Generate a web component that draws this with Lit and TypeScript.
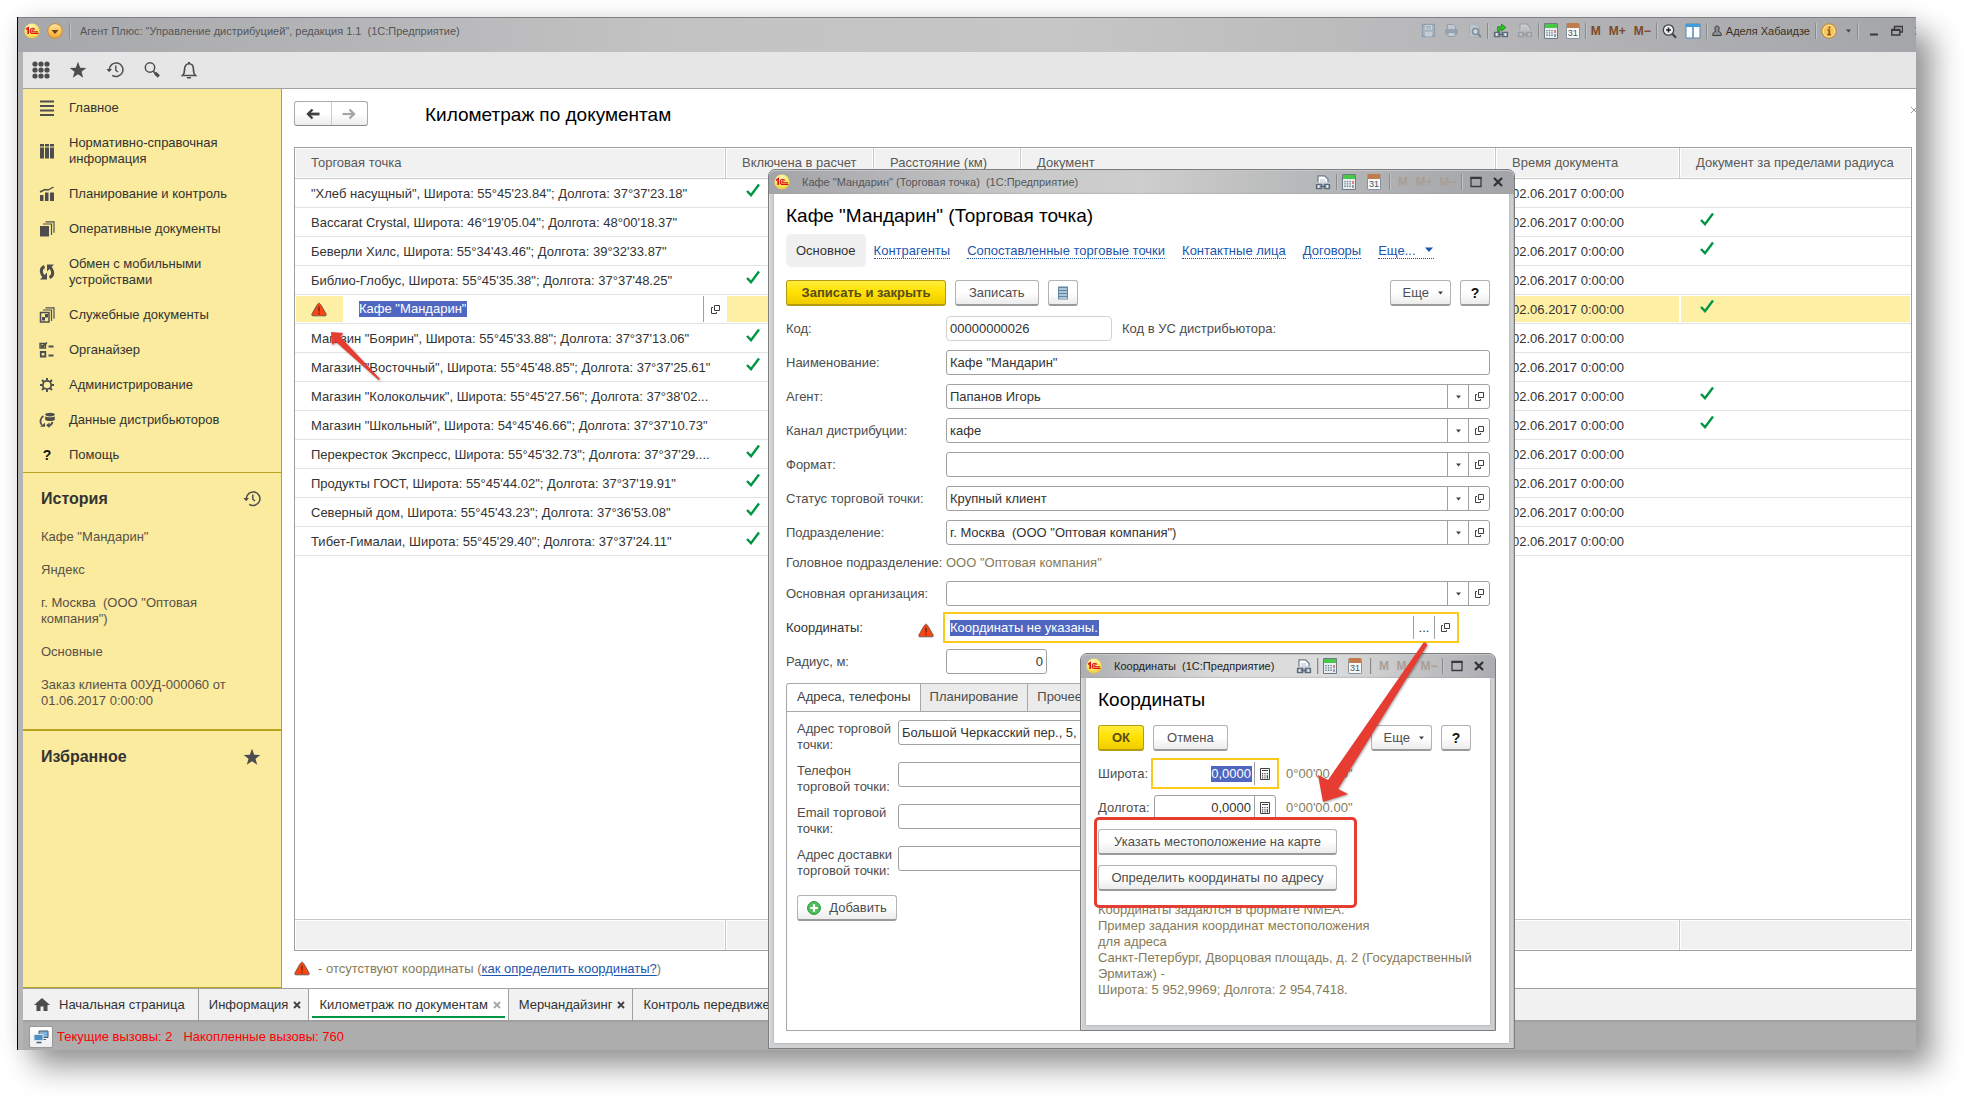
import { LitElement, html, css, svg, nothing } from "lit";
import { customElement, property } from "lit/decorators.js";
import { classMap } from "lit/directives/class-map.js";

/* ---------- icons ---------- */
const icon = (w: number, h: number, body: unknown) =>
  html`<svg class="ico" width=${w} height=${h} viewBox="0 0 ${w} ${h}" aria-hidden="true">${body}</svg>`;

const logo = () => icon(16, 16, svg`
  <defs><radialGradient id="lg" cx=".45" cy=".3" r=".75"><stop offset="0" stop-color="#fffbc8"/><stop offset=".6" stop-color="#fbe75a"/><stop offset="1" stop-color="#e6b93c"/></radialGradient></defs>
  <circle cx="8" cy="8" r="7.6" fill="url(#lg)"/>
  <path d="M2 6.4L4.2 4.9V11" fill="none" stroke="#dc1414" stroke-width="1.7"/>
  <path d="M11 6.6C9.800 4.300 6.200 5 6.200 7.900C6.200 9.700 7.200 10.500 8.800 10.500H14.500M10 7.200C9 6.400 7.900 7 7.900 8C7.900 8.700 8.400 8.900 9 8.900H14" fill="none" stroke="#dc1414" stroke-width="1.100"/>`);
const menuBall = () => icon(16, 20, svg`
  <defs><linearGradient id="mb" x2="0" y2="1"><stop offset="0" stop-color="#ffe9ae"/><stop offset=".5" stop-color="#fbc45c"/><stop offset="1" stop-color="#f3a83a"/></linearGradient></defs>
  <circle cx="8" cy="10" r="7.300" fill="url(#mb)" stroke="#c98a33" stroke-width="1"/><path d="M4.500 9h7l-3.500 4z" fill="#6b4216"/>`);
const grid = () => icon(18, 18, svg`${[3, 9, 15].map(y => [3, 9, 15].map(x => svg`<circle cx=${x} cy=${y} r="2.600" fill="#4d4d4d"/>`))}`);
const star = () => icon(18, 18, svg`<path d="M9 .8L11.200 6.700L17.300 6.900L12.500 10.700L14.200 16.700L9 13.200L3.800 16.700L5.500 10.700L.7 6.900L6.800 6.700Z" fill="#4d4d4d"/>`);
const history = () => icon(18, 18, svg`
  <path d="M3.300 8.500A6.800 6.800 0 1 1 6.200 14.300" fill="none" stroke="#4d4d4d" stroke-width="1.500"/>
  <path d="M.4 8L6 8L3.200 11.200Z" fill="#4d4d4d"/><path d="M9.800 4.500V9.200L12 11" fill="none" stroke="#4d4d4d" stroke-width="1.400"/>`);
const search = () => icon(18, 18, svg`<circle cx="7" cy="6.500" r="4.700" fill="none" stroke="#4d4d4d" stroke-width="1.500"/><path d="M10 10L12.500 12.300" stroke="#4d4d4d" stroke-width="1.600"/><path d="M12 11.800L15.800 15.500" stroke="#4d4d4d" stroke-width="3.200"/>`);
const bell = () => icon(18, 18, svg`<path d="M2.500 14.500C4.600 12.500 4.600 11 4.600 8C4.600 4.700 6.300 2.800 9 2.800S13.400 4.700 13.400 8C13.400 11 13.400 12.500 15.500 14.500Z" fill="none" stroke="#4d4d4d" stroke-width="1.600"/><rect x="8" y="1" width="2" height="2" fill="#4d4d4d"/><path d="M7 16h4v1.500h-4z" fill="#4d4d4d"/>`);

const nav: Record<string, unknown> = {
  main: svg`<path d="M1 1.500h14M1 6h14M1 10.500h14M1 15h14" stroke="#4d4d4d" stroke-width="2"/>`,
  ref: svg`<path d="M1 1h4v2.500h-4zM6 1h4v2.500h-4zM11 1h4v2.500h-4zM1 4.500h4v11h-4zM6 4.500h4v11h-4zM11 4.500h4v11h-4z" fill="#4d4d4d"/>`,
  plan: svg`<path d="M1 9h3.500v6h-3.500zM6 6.500h3.500v8.500h-3.500zM11 6.500h4v8.500h-4z" fill="#4d4d4d"/><path d="M1 6L6 3.500L9 4L14.500 1" fill="none" stroke="#4d4d4d" stroke-width="1.400"/>`,
  oper: svg`<path d="M1 5h9v10.500h-9z" fill="#4d4d4d"/><path d="M4 3h8.500v11M6.500 .8h8.500v11" fill="none" stroke="#4d4d4d" stroke-width="1.200"/>`,
  sync: svg`<path d="M5.500 2.500C3 3.500 2 6 2.500 8.500C2.900 10.500 4 12 5.500 13" fill="none" stroke="#4d4d4d" stroke-width="3"/><path d="M1 15.500h7V8.500z" fill="#4d4d4d"/><path d="M10.500 13.500C13 12.500 14 10 13.500 7.500C13.100 5.500 12 4 10.500 3" fill="none" stroke="#4d4d4d" stroke-width="3"/><path d="M15 .5H8V7.500z" fill="#4d4d4d"/>`,
  serv: svg`<path d="M1.500 5.500h8.500v9.500h-8.500z" fill="none" stroke="#4d4d4d" stroke-width="1.500"/><path d="M3 10h3v3.500h-3zM6 7h3v3.500h-3z" fill="#4d4d4d"/><path d="M4 3h8.500v11M6.500 .8h8.500v11" fill="none" stroke="#4d4d4d" stroke-width="1.200"/>`,
  org: svg`<path d="M1 1.500h5.500v4.500h-5.500z" fill="none" stroke="#4d4d4d" stroke-width="1.300"/><path d="M1.500 2.500L4 5L8 .5M1.500 5.500L6 2" fill="none" stroke="#4d4d4d" stroke-width="1.300"/><path d="M9.500 4.500h5" stroke="#4d4d4d" stroke-width="2"/><path d="M1.800 10h4.500v4.500h-4.500z" fill="none" stroke="#4d4d4d" stroke-width="1.800"/><path d="M9.500 13.500h5" stroke="#4d4d4d" stroke-width="2"/>`,
  admin: svg`<circle cx="8" cy="8" r="4.200" fill="none" stroke="#4d4d4d" stroke-width="1.800"/><path d="M8 1v2.500M8 12.500V15M1 8h2.500M12.500 8H15M3 3l2 2M11 11l2 2M13 3l-2 2M5 11l-2 2" stroke="#4d4d4d" stroke-width="1.900"/>`,
  data: svg`<ellipse cx="11" cy="2.600" rx="4.800" ry="1.800" fill="#4d4d4d"/><path d="M6.200 4.200c1 1.400 8.600 1.400 9.600 0v3.500c-1 1.800-8.600 1.800-9.600 0z" fill="#4d4d4d"/><path d="M4.500 4C1 6 .5 10.500 2.800 13" fill="none" stroke="#4d4d4d" stroke-width="1.800"/><path d="M1 14.800h5v-4z" fill="#4d4d4d"/><path d="M13.500 10C13 12 11.500 13.500 9.500 13.800" fill="none" stroke="#4d4d4d" stroke-width="1.800"/><path d="M7 13.300l3.500-2.800v5.500z" fill="#4d4d4d"/>`,
};

const arrowL = (c: string) => icon(14, 12, svg`<path d="M6.500 1.500L2 6L6.500 10.500" fill="none" stroke=${c} stroke-width="2.400"/><path d="M2 6H13.500" stroke=${c} stroke-width="2.800"/>`);
const arrowR = (c: string) => icon(14, 12, svg`<path d="M7.500 1.500L12 6L7.500 10.500" fill="none" stroke=${c} stroke-width="2.400"/><path d="M12 6H.5" stroke=${c} stroke-width="2.200"/>`);
const check = () => icon(14, 14, svg`<path d="M1 8L5 12.200L13 1.500" fill="none" stroke="#009646" stroke-width="2.400"/>`);
const warn = () => icon(16, 15, svg`<path d="M8 1.200C8.800 1.200 9.500 2.200 10.200 3.400L14.800 11.500C15.600 13 15.300 13.800 14 13.800H2C.7 13.800 .4 13 1.200 11.500L5.800 3.400C6.500 2.200 7.200 1.200 8 1.200Z" fill="#fb4410" stroke="#6d5a52" stroke-width="1"/><path d="M8 4.500V9.500M8 10.800V12.300" stroke="#7c2d12" stroke-width="1.600"/>`);
const open = () => icon(11, 11, svg`<path d="M4.500 1.500h5v5h-5z" fill="none" stroke="#404040"/><path d="M3 3.500h-1.500v6h5v-1.500" fill="none" stroke="#404040"/>`);
const caret = (c = "#404040") => icon(7, 4, svg`<path d="M1 .5h5L3.500 3.500z" fill=${c}/>`);
const calcMono = () => icon(10, 12, svg`<path d="M.5 .5h9v11h-9z" fill="#fff" stroke="#404040"/><path d="M2 2.500h6" stroke="#404040"/><path d="M2 5h1.200v1.200h-1.200zM4.400 5h1.200v1.200h-1.200zM6.800 5h1.200v1.200h-1.200zM2 7.300h1.200v1.200h-1.200zM4.400 7.300h1.200v1.200h-1.200zM6.800 7.300h1.200v3.200h-1.200zM2 9.300h1.200v1.200h-1.200zM4.400 9.300h1.200v1.200h-1.200z" fill="#404040"/>`);
const listIcon = () => icon(12, 14, svg`<path d="M1 .5h10v13h-10z" fill="#5f87a5"/><path d="M2 3h8M2 6h8M2 9h8M2 12h8" stroke="#c5dcec" stroke-width="1.400"/>`);
const plus = () => icon(14, 14, svg`<circle cx="7" cy="7" r="6.400" fill="#4fbf5a" stroke="#239338"/><path d="M7 3.200V10.800M3.200 7H10.800" stroke="#fff" stroke-width="2.200"/>`);
const home = () => icon(16, 13, svg`<path d="M8 0L16 7H13.500V13H9.500V8.500H6.500V13H2.500V7H0Z" fill="#4d4d4d"/>`);
const cross = (c: string) => icon(8, 8, svg`<path d="M1 1L7 7M7 1L1 7" stroke=${c} stroke-width="1.800"/>`);
const monitors = () => icon(16, 14, svg`<path d="M6 1h9v6.500h-9z" fill="#7fb2d8" stroke="#4a5a68"/><path d="M9 9.500h4" stroke="#4a5a68"/><path d="M1 4.500h9v6h-9z" fill="#4e8ec0" stroke="#d6e6f0"/><path d="M3.500 12.500h5" stroke="#4a5a68" stroke-width="1.500"/>`);

const save = () => icon(15, 15, svg`<path d="M1.500 1.500h12v12h-12z" fill="#a9b5c1" stroke="#8e9eae" stroke-width="1.300"/><path d="M4 2h7v4.500h-7z" fill="#d0d5da"/><path d="M4 9h7v4.500h-7z" fill="#c4cbd2"/><path d="M5 3.500h5M5 5h5" stroke="#9aa8b6"/>`);
const print = () => icon(15, 15, svg`<path d="M3.500 6V1.500h6l2 2V6" fill="#c2c8ce" stroke="#919fac"/><path d="M1 6h13v5.500h-13z" fill="#95a3b1"/><path d="M4 9.500h7v4h-7z" fill="#c6ccd2" stroke="#919fac"/>`);
const preview = () => icon(15, 15, svg`<path d="M2.500 1h7l3 3v10h-10z" fill="#bcc4cb" stroke="#a0acb7"/><circle cx="8.500" cy="8.500" r="3" fill="#cbd2d8" stroke="#7d8d9b" stroke-width="1.500"/><path d="M10.800 10.800L14 14" stroke="#7d8d9b" stroke-width="2"/>`);
const chain = svg`<path d="M1.700 9.500h4.800v4h-4.800zM9.500 9.500h4.800v4h-4.800z" fill="#fff" stroke="#5a6c7c" stroke-width="1.700" stroke-linejoin="round"/><path d="M4.500 11.500h7" stroke="#5a6c7c" stroke-width="1.700"/>`;
const linkIn = () => icon(16, 15, svg`${chain}<path d="M4.500 8.500V3.800H8.500V1L13 4.600L8.500 8V6H6.800V8.500Z" fill="#2fc52a" stroke="#158a16" stroke-width=".8"/>`);
const linkDoc = (op: number) => icon(16, 15, svg`<g opacity=${op}><path d="M3 9V.8h6.500l3.500 3.500V9" fill="#fff" stroke="#6a7a89" stroke-width="1.200"/><path d="M5 5h5M5 7h6" stroke="#b4bfc9"/><path d="M1 7.500h14v6h-14z" fill="#c9d0d7"/>${chain}</g>`);
const calc = () => icon(14, 16, svg`<path d="M.5 .5h13v15h-13z" fill="#e9edf0" stroke="#6d7b85"/><path d="M1 1h12v4h-12z" fill="#49c74b"/><path d="M3 7v7M5.500 7v7M8 7v7" stroke="#5d7888" stroke-width="1.300" stroke-dasharray="1.300 1"/><path d="M11 7v3" stroke="#d84a3a" stroke-width="1.300"/><path d="M11 11v3" stroke="#5d7888" stroke-width="1.300"/>`);
const calendar = () => html`<span class="cal"><span class="calday">31</span></span>`;
const mag = () => icon(15, 16, svg`<circle cx="6.500" cy="7" r="5.200" fill="#eef0f2" stroke="#3f4448" stroke-width="1.300"/><path d="M4 7h5M6.500 4.500v5" stroke="#222" stroke-width="1.500"/><path d="M10.500 11L14 14.800" stroke="#3f4448" stroke-width="2.200"/>`);
const cols = () => icon(16, 16, svg`<path d="M1 1h14v14h-14z" fill="#fdfdfd" stroke="#5686ad"/><path d="M1 1h14v3h-14z" fill="#3f9be0"/><path d="M8 4v11" stroke="#5686ad" stroke-width="1.500"/>`);
const user = () => icon(10, 12, svg`<path d="M5 1C6.500 1 7.200 2 7.200 3.300C7.200 4.800 6.400 5.600 6.400 6.500C8.500 7 9.300 8 9.300 10.500H.7C.7 8 1.500 7 3.600 6.500C3.600 5.600 2.800 4.800 2.800 3.300C2.800 2 3.500 1 5 1Z" fill="#8d8d8d" stroke="#3c3c3c"/>`);
const info = () => icon(16, 16, svg`<circle cx="8" cy="8" r="7.200" fill="#f9c55e" stroke="#c48828"/><circle cx="8" cy="8" r="5.800" fill="none" stroke="#fde3a5"/><path d="M8.400 3.500v2M6.500 7h1.800v4.500M6.300 11.700h3.600" stroke="#8a5a12" stroke-width="1.700" fill="none"/>`);
const minimize = () => icon(9, 12, svg`<path d="M0 9.500h8" stroke="#3a3a3a" stroke-width="2"/>`);
const restore = () => icon(12, 12, svg`<path d="M3.500 4V1.500h8v5.500H9" fill="none" stroke="#3a3a3a" stroke-width="1.400"/><path d="M.8 4.500h8v5.500h-8z" fill="none" stroke="#3a3a3a" stroke-width="1.400"/><path d="M.5 5h8.500" stroke="#3a3a3a" stroke-width="2"/>`);
const maximize = () => icon(12, 12, svg`<path d="M1 1.500h10v9h-10z" fill="none" stroke="#3a3a3a" stroke-width="1.300"/><path d="M.5 2h11" stroke="#3a3a3a" stroke-width="2"/>`);
const winClose = () => icon(10, 10, svg`<path d="M1 1L9 9M9 1L1 9" stroke="#333" stroke-width="2.300"/>`);

const base = css`
  * { box-sizing: border-box; }
  .ico { display: block; flex: none; }
  button, input, select { font: inherit; color: inherit; margin: 0; padding: 0; border: 0; background: none; border-radius: 0; }
  button { cursor: pointer; }
  .tb { display: flex; align-items: center; justify-content: center; flex: none; }
  .sep { width: 1px; height: 16px; background: #8a8b8e; box-shadow: 1px 0 #c2c3c6; flex: none; }
  .mem { font-weight: bold; font-size: 12px; color: #7c4a26; }
  .mem.off { color: #a99e96; }
  .cal { display: block; width: 14px; height: 16px; border: 1px solid #8493a0; border-top: 5px solid #c07c4c; background: #f6f8fa; border-radius: 2px; }
  .calday { display: block; font-size: 9px; line-height: 10px; color: #46545f; text-align: center; }
`;

/* ---------- child window of the desktop ---------- */
@customElement("child-window")
export class ChildWindow extends LitElement {
  @property() heading = "";
  @property({ type: Boolean, reflect: true }) active = false;

  static styles = [base, css`
    :host { display: flex; flex-direction: column; background: #cfd0d1; border: 1px solid #7c7d7f; border-radius: 7px 7px 0 0; padding: 0 5px 5px; box-shadow: inset 1px 0 #dedfe0, inset -1px 0 #b9babc; }
    .bar { display: flex; align-items: center; height: 24px; margin: 0 -5px; padding: 0 11px 0 5px; border-radius: 6px 6px 0 0; background: linear-gradient(90deg, #a3a4a7, #c9c9c9 35%, #cecece 50%, #b9babb 70%, #a3a4a8); box-shadow: inset 0 1px #c6c7c9; font-size: 11px; color: #55565a; }
    :host([active]) .bar { background: linear-gradient(90deg, #aeafb2, #dcdcdc 35%, #dcdcdc 60%, #acadb1); color: #222; }
    .name { flex: 1; margin-left: 12px; white-space: pre; overflow: hidden; }
    .tools { display: flex; align-items: center; }
    .tools .mem { width: 16px; text-align: center; }
    .body { flex: 1; display: flex; flex-direction: column; background: #fff; min-height: 0; box-shadow: 0 0 2px #9a9b9d; }
    .g5 { margin-left: 5px; } .g8 { margin-left: 8px; } .g11 { margin-left: 11px; }
  `];

  render() {
    return html`
      <div class="bar">${logo()}<span class="name">${this.heading}</span>
        <div class="tools">
          <button class="tb" aria-label="Печать">${linkDoc(1)}</button><span class="sep g5"></span>
          <button class="tb g5" aria-label="Калькулятор">${calc()}</button>
          <button class="tb g11" aria-label="Календарь">${calendar()}</button><span class="sep g8"></span>
          <button class="tb mem off g5">M</button><button class="tb mem off g5">M+</button><button class="tb mem off g8">M−</button><span class="sep g5"></span>
          <button class="tb g8" aria-label="Развернуть">${maximize()}</button>
          <button class="tb g11" aria-label="Закрыть">${winClose()}</button>
        </div>
      </div>
      <div class="body"><slot></slot></div>`;
  }
}

type Row = [string, boolean, boolean];
const rows: Row[] = [
  [`"Хлеб насущный", Широта: 55°45'23.84"; Долгота: 37°37'23.18"`, true, false],
  [`Baccarat Crystal, Широта: 46°19'05.04"; Долгота: 48°00'18.37"`, false, true],
  [`Беверли Хилс, Широта: 55°34'43.46"; Долгота: 39°32'33.87"`, false, true],
  [`Библио-Глобус, Широта: 55°45'35.38"; Долгота: 37°37'48.25"`, true, false],
  [`Кафе "Мандарин"`, false, true],
  [`Магазин "Боярин", Широта: 55°45'33.88"; Долгота: 37°37'13.06"`, true, false],
  [`Магазин "Восточный", Широта: 55°45'48.85"; Долгота: 37°37'25.61"`, true, false],
  [`Магазин "Колокольчик", Широта: 55°45'27.56"; Долгота: 37°38'02...`, false, true],
  [`Магазин "Школьный", Широта: 54°45'46.66"; Долгота: 37°37'10.73"`, false, true],
  [`Перекресток Экспресс, Широта: 55°45'32.73"; Долгота: 37°37'29....`, true, false],
  [`Продукты ГОСТ, Широта: 55°45'44.02"; Долгота: 37°37'19.91"`, true, false],
  [`Северный дом, Широта: 55°45'43.23"; Долгота: 37°36'53.08"`, true, false],
  [`Тибет-Гималаи, Широта: 55°45'29.40"; Долгота: 37°37'24.11"`, true, false],
];
const sections: [string, string][] = [
  ["main", "Главное"], ["ref", "Нормативно-справочная информация"], ["plan", "Планирование и контроль"],
  ["oper", "Оперативные документы"], ["sync", "Обмен с мобильными устройствами"], ["serv", "Служебные документы"],
  ["org", "Органайзер"], ["admin", "Администрирование"], ["data", "Данные дистрибьюторов"], ["help", "Помощь"],
];
const recent = [`Кафе "Мандарин"`, `Яндекс`, `г. Москва  (ООО "Оптовая компания")`, `Основные`, `Заказ клиента 00УД-000060 от 01.06.2017 0:00:00`];

@customElement("app-root")
export class AppRoot extends LitElement {
  static styles = [base, css`
    :host { display: block; font-family: "Liberation Sans", Arial, sans-serif; font-size: 13px; line-height: 16px; color: #333; background: #fff; }
    .page { min-height: 100vh; padding: 17px 48px 48px 17px; display: flex; overflow: hidden; }
    .app { position: relative; flex: 1; min-width: 0; display: flex; flex-direction: column; border-left: 1px solid #000; padding-left: 5px; background: #b4b4b5; box-shadow: 17px 17px 28px rgba(0,0,0,.4), 0 0 20px rgba(0,0,0,.08); }
    a { color: #1c55ae; }

    .titlebar { display: flex; align-items: center; height: 35px; margin-left: -5px; padding: 0 0 9px 6px; border-top: 1px solid #7f8082; background: linear-gradient(90deg, #a6a7aa, #c3c3c4 35%, #c6c6c6 55%, #a5a6aa); font-size: 11px; color: #55565a; overflow: hidden; }
    .titlebar .ball { margin: 0 6px 0 7px; }
    .titlebar .name { flex: 1; white-space: pre; margin-left: 10px; }
    .tools { display: flex; align-items: center; gap: 5px; margin-right: -9px; }
    .tools .tb + .tb { margin-left: 3px; }
    .tools .tb.wide { margin-left: 7px; }
    .user { gap: 4px; color: #40301c; white-space: nowrap; }
    .toolbar { display: flex; align-items: center; gap: 19px; height: 37px; padding-left: 9px; background: #e6e6e6; border-bottom: 1px solid #a0a0a0; }

    .middle { flex: 1; display: flex; min-height: 0; background: #fff; }
    .side { flex: none; width: 259px; display: flex; flex-direction: column; background: #faeb9e; border-right: 1px solid #b9a21c; border-bottom: 1px solid #b9a21c; }
    .sections { list-style: none; margin: 0; padding: 1px 0 0; border-bottom: 1px solid #b9a21c; }
    .sections a { display: flex; align-items: center; gap: 14px; padding: 10px 40px 9px 16px; color: #333; text-decoration: none; }
    .sections .q { width: 16px; text-align: center; font-size: 14px; font-weight: bold; color: #111; flex: none; }
    .block { padding: 16px 20px 0 18px; }
    .block.hist { padding-bottom: 20px; border-bottom: 2px solid #b9a21c; }
    .blockhead { display: flex; align-items: center; justify-content: space-between; }
    h2 { margin: 0; font-size: 16px; line-height: 20px; color: #333; }
    .recent { list-style: none; margin: 20px 0 0; padding: 0; display: flex; flex-direction: column; gap: 17px; }
    .recent a { color: #595048; text-decoration: none; white-space: pre-wrap; display: block; max-width: 190px; }

    .work { flex: 1; min-width: 0; display: flex; flex-direction: column; padding: 12px 4px 0 12px; }
    .head { display: flex; align-items: flex-start; height: 46px; }
    .navbtns { display: flex; border: 1px solid #aaa; border-bottom-color: #888; border-radius: 3px; background: linear-gradient(#fff 50%, #ececec); width: 74px; height: 25px; }
    .navbtns button { flex: 1; display: flex; align-items: center; justify-content: center; }
    .navbtns button + button { border-left: 1px solid #ccc; }
    h1 { margin: 4px 0 0 57px; flex: 1; font-size: 19px; line-height: 20px; font-weight: normal; color: #000; }
    .head .x { margin: 5px -4px 0 0; }

    .tablebox { flex: 1; display: flex; border: 1px solid #a0a0a0; min-height: 0; }
    table { width: 100%; table-layout: fixed; border-collapse: separate; border-spacing: 0; }
    .c1 { width: 431px; } .c2 { width: 148px; } .c3 { width: 147px; } .c4 { width: 475px; } .c5 { width: 184px; }
    th, tfoot td { height: 31px; padding: 0 0 0 16px; text-align: left; font-weight: normal; color: #595959; background: #f1f1f1; border: 0 solid #c8c8c8; border-right-width: 1px; box-shadow: inset 0 0 0 1px #fff; white-space: nowrap; }
    th { border-bottom-width: 1px; }
    tfoot td { border-top-width: 1px; }
    th:last-child, tfoot td:last-child { border-right-width: 0; }
    tbody td { height: 29px; padding: 1px 0 0 16px; border-bottom: 1px solid #e2e2e2; white-space: nowrap; overflow: hidden; }
    .tick { display: block; padding: 0 0 7px 4px; }
    tr.fill td { height: auto; border: 0; }
    tr.sel td { background: #fdf0a4; box-shadow: inset 0 0 0 1px #fff; }
    tr.sel td:first-child { padding: 0; }
    .edit { display: flex; align-items: stretch; height: 26px; }
    .edit .mark { width: 48px; display: flex; align-items: center; justify-content: center; }
    .edit .val { flex: 1; background: #fff; display: flex; align-items: center; padding-left: 16px; }
    .edit .opn { width: 23px; background: #fff; border-left: 1px solid #a0a0a0; display: flex; align-items: center; justify-content: center; }
    .hl { field-sizing: content; height: 16px; padding-right: 1px; background: #4f67c1; color: #fff; }
    .legend { display: flex; align-items: center; gap: 8px; height: 37px; padding-bottom: 2px; color: #857b58; }
    .legend a { text-underline-offset: 2px; }

    .tabs { display: flex; height: 34px; border-top: 1px solid #a0a0a0; border-bottom: 2px solid #a0a0a0; background: #f1f1f1; overflow: hidden; }
    .tab { display: flex; align-items: center; gap: 5px; padding: 0 7px 0 10px; border-right: 1px solid #a0a0a0; white-space: nowrap; }
    .tab.first { padding: 0 13px 0 11px; gap: 9px; }
    .tab.on { background: linear-gradient(#009646, #009646) no-repeat center bottom 2px / calc(100% - 6px) 2px, #fff; }
    .status { display: flex; align-items: center; gap: 4px; height: 28px; padding: 2px 0 0 6px; background: #adadad; color: #f00; white-space: pre; }
    .status button { width: 24px; height: 22px; display: flex; align-items: center; justify-content: center; background: linear-gradient(#fff, #eee); border: 1px solid #999; border-radius: 2px; }

    /* windows lying over the desktop */
    .w1 { position: absolute; left: 750px; top: 152px; bottom: 1px; width: 747px; z-index: 1; }
    .w2 { position: absolute; left: 1062px; top: 636px; bottom: 19px; width: 416px; z-index: 2; }
    .form { flex: 1; display: flex; flex-direction: column; padding: 12px 19px 12px 12px; min-height: 0; }
    .w1 .form h1, .w2 .form h1 { margin: 0; flex: none; }
    .pages { display: flex; align-items: center; height: 33px; margin-top: 8px; }
    .pages a { margin: 0 9px 0 8px; text-decoration: none; border-bottom: 1px dotted #1c55ae; line-height: 15px; display: flex; align-items: center; gap: 8px; white-space: nowrap; }
    .pages .cur { background: #f0f0f0; border-radius: 5px; padding: 0 10px; height: 33px; line-height: 33px; }
    .btns { display: flex; gap: 9px; margin: 13px 0 10px; }
    .btn { height: 26px; display: flex; align-items: center; justify-content: center; gap: 8px; padding: 1px 13px 0; white-space: nowrap; color: #4d4d4d; border: 1px solid #b3b3b3; border-bottom: 2px solid #9a9a9a; border-radius: 3px; background: linear-gradient(#fff 50%, #ececec); }
    .btn.main { font-weight: bold; background: linear-gradient(#ffec3c, #ffe100 50%, #f0cc00); border-color: #b39b14; color: #574d1c; }
    .btn.wide { min-width: 160px; }
    .btn.sq { width: 30px; padding: 0; }
    .btn.q { font-weight: bold; font-size: 14px; color: #111; }
    .btn.more { padding: 1px 6px 0 12px; }
    .push { margin-left: auto; }
    .rows { display: flex; flex-direction: column; gap: 9px; }
    .row { display: flex; align-items: center; height: 25px; color: #4d4d4d; }
    .row > label, .row > .lab { width: 160px; flex: none; white-space: nowrap; }
    .row.short { height: 18px; }
    .row .note, .note { color: #857b58; }
    .strong > label { color: #333; }
    .fld { display: flex; align-items: stretch; height: 25px; flex: 1; min-width: 0; border: 1px solid #a0a0a0; border-radius: 3px; background: #fff; color: #333; }
    .fld > input:not(.hl) { flex: 1; min-width: 0; padding: 0 3px; }
    .fld.ro { border-color: #d2d2d2; border-radius: 4px; }
    .fld button { width: 21px; flex: none; border-left: 1px solid #a0a0a0; display: flex; align-items: center; justify-content: center; }
    .fld.w166 { flex: none; width: 166px; } .fld.w101 { flex: none; width: 101px; } .fld.w122 { flex: none; width: 122px; }
    .num { text-align: right; }
    .combo { flex: 1; display: grid; grid-template-columns: 1fr 21px; min-width: 0; }
    .combo select { grid-area: 1 / 1 / 2 / 3; appearance: none; padding: 0 24px 0 3px; white-space: pre; outline: 0; }
    .combo .cr { grid-area: 1 / 2; pointer-events: none; border-left: 1px solid #a0a0a0; display: flex; align-items: center; justify-content: center; }
    .fld.focus { border-color: #fff; outline: 2px solid #fbc91c; outline-offset: 1px; border-radius: 0; }
    .fld .sp { flex: 1; display: flex; align-items: center; padding-left: 3px; }
    .fld .sp.r { justify-content: flex-end; padding: 0 2px 0 0; }
    .coord { padding-right: 34px; }
    .coord label { display: flex; align-items: center; justify-content: space-between; padding-right: 12px; }
    .coord label .ico { margin-top: 5px; }
    .below { margin-left: 10px; }

    .ptabs { display: flex; height: 29px; margin: 9px 0 -1px; }
    .ptab { padding: 0 9px 1px; border: 1px solid #a8a8a8; margin-right: -1px; background: #ebebeb; color: #4d4d4d; }
    .ptab.on { background: #fff; border-bottom-color: #fff; border-radius: 3px 0 0; color: #404040; padding: 0 9px 1px 10px; }
    .panel { flex: 1; border: 1px solid #a8a8a8; padding: 8px 10px; display: flex; flex-direction: column; gap: 9px; align-items: stretch; }
    .prow { display: flex; height: 33px; color: #4d4d4d; }
    .prow label { width: 101px; flex: none; white-space: pre; padding-top: 1px; }
    .panel .btn { align-self: flex-start; margin-top: 7px; min-width: 100px; padding: 0 7px; }
    .w2 .btns { margin-top: 15px; }
    .w2 .row > label { width: 56px; }
    .w2 .acts { display: flex; flex-direction: column; gap: 10px; width: 239px; margin: 9px 0 11px; }
    .hint { margin: 0; white-space: pre; }

    .redbox { position: absolute; left: 1076px; top: 800px; width: 263px; height: 91px; border: 3px solid #e63c32; border-radius: 5px; z-index: 3; pointer-events: none; }
    .arrow1, .arrow2 { position: absolute; z-index: 3; pointer-events: none; filter: drop-shadow(1px 1px 1px rgba(0,0,0,.35)); }
    .arrow1 { left: 311px; top: 313px; }
    .arrow2 { left: 1295px; top: 623px; }
  `];

  private combo(id: string, label: string, value: string) {
    return html`<div class="row"><label for=${id}>${label}</label>
      <div class="fld"><span class="combo"><select id=${id}><option>${value}</option></select><span class="cr">${caret()}</span></span>
      <button aria-label="Открыть">${open()}</button></div></div>`;
  }

  private renderRow([text, inc, out]: Row) {
    const sel = text.startsWith("Кафе");
    return html`<tr class=${classMap({ sel })}>
      <td>${sel
        ? html`<div class="edit"><span class="mark">${warn()}</span><span class="val"><input class="hl" size="15" aria-label="Торговая точка" .value=${text}></span><button class="opn" aria-label="Открыть">${open()}</button></div>`
        : text}</td>
      <td>${inc ? html`<span class="tick">${check()}</span>` : nothing}</td><td></td><td></td>
      <td>02.06.2017 0:00:00</td>
      <td>${out ? html`<span class="tick">${check()}</span>` : nothing}</td></tr>`;
  }

  private renderCard() {
    return html`<child-window class="w1" heading=${`Кафе "Мандарин" (Торговая точка)  (1С:Предприятие)`}>
      <div class="form">
        <h1>Кафе "Мандарин" (Торговая точка)</h1>
        <nav class="pages"><span class="cur">Основное</span><a href="#">Контрагенты</a><a href="#">Сопоставленные торговые точки</a><a href="#">Контактные лица</a><a href="#">Договоры</a><a href="#">Еще... ${icon(10, 6, svg`<path d="M1 .5h8L5 5z" fill="#1c55ae"/>`)}</a></nav>
        <div class="btns"><button class="btn main wide">Записать и закрыть</button><button class="btn">Записать</button><button class="btn sq" aria-label="Список">${listIcon()}</button><button class="btn more push">Еще ${caret()}</button><button class="btn sq q">?</button></div>
        <div class="rows">
          <div class="row"><label for="code">Код:</label><div class="fld ro w166"><input id="code" value="00000000026" readonly></div><span class="below">Код в УС дистрибьютора:</span></div>
          <div class="row"><label for="nm">Наименование:</label><div class="fld"><input id="nm" value='Кафе "Мандарин"'></div></div>
          ${this.combo("agent", "Агент:", "Папанов Игорь")}
          ${this.combo("chan", "Канал дистрибуции:", "кафе")}
          ${this.combo("fmt", "Формат:", "")}
          ${this.combo("stat", "Статус торговой точки:", "Крупный клиент")}
          ${this.combo("dept", "Подразделение:", `г. Москва\u00a0 (ООО "Оптовая компания")`)}
          <div class="row short strong"><span class="lab">Головное подразделение:</span><span class="note">ООО "Оптовая компания"</span></div>
          ${this.combo("org", "Основная организация:", "")}
          <div class="row coord strong"><label for="coord">Координаты:${warn()}</label><div class="fld focus"><span class="sp"><input id="coord" class="hl" size="20" value="Координаты не указаны."></span><button aria-label="Выбрать">...</button><button aria-label="Открыть">${open()}</button></div></div>
          <div class="row"><label for="rad">Радиус, м:</label><div class="fld w101"><input id="rad" class="num" value="0"></div></div>
        </div>
        <div class="ptabs"><button class="ptab on">Адреса, телефоны</button><button class="ptab">Планирование</button><button class="ptab">Прочее</button></div>
        <div class="panel">
          ${[["a1", "Адрес торговой\nточки:", "Большой Черкасский пер., 5, Москва"], ["a2", "Телефон\nторговой точки:", ""], ["a3", "Email торговой\nточки:", ""], ["a4", "Адрес доставки\nторговой точки:", ""]].map(([id, l, v]) => html`<div class="prow"><label for=${id}>${l}</label><div class="fld"><input id=${id} .value=${v}></div></div>`)}
          <button class="btn">${plus()} Добавить</button>
        </div>
      </div>
    </child-window>`;
  }

  private renderCoords() {
    return html`<child-window class="w2" active heading="Координаты  (1С:Предприятие)">
      <div class="form">
        <h1>Координаты</h1>
        <div class="btns"><button class="btn main">ОК</button><button class="btn">Отмена</button><button class="btn more push">Еще ${caret()}</button><button class="btn sq q">?</button></div>
        <div class="rows">
          <div class="row"><label for="lat">Широта:</label><div class="fld focus w122"><span class="sp r"><input id="lat" class="hl" size="5" value="0,0000"></span><button aria-label="Калькулятор">${calcMono()}</button></div><span class="note below">0°00'00.00"</span></div>
          <div class="row"><label for="lon">Долгота:</label><div class="fld w122"><input id="lon" class="num" value="0,0000"><button aria-label="Калькулятор">${calcMono()}</button></div><span class="note below">0°00'00.00"</span></div>
        </div>
        <div class="acts"><button class="btn">Указать местоположение на карте</button><button class="btn">Определить координаты по адресу</button></div>
        <p class="hint note">${"Координаты задаются в формате NMEA.\nПример задания координат местоположения\nдля адреса\nСанкт-Петербург, Дворцовая площадь, д. 2 (Государственный\nЭрмитаж) -\nШирота: 5 952,9969; Долгота: 2 954,7418."}</p>
      </div>
    </child-window>`;
  }

  render() {
    const tb = (label: string, c: unknown, wide = false) => html`<button class=${classMap({ tb: true, wide })} aria-label=${label}>${c}</button>`;
    const sep = html`<span class="sep"></span>`;
    return html`<div class="page"><div class="app">
      <header class="titlebar">${logo()}<button class="tb ball" aria-label="Меню">${menuBall()}</button>${sep}
        <span class="name">Агент Плюс: "Управление дистрибуцией", редакция 1.1  (1С:Предприятие)</span>
        <div class="tools">${tb("Сохранить", save())}${tb("Печать", print())}${tb("Просмотр", preview())}${sep}${tb("Получить ссылку", linkIn())}${tb("Перейти по ссылке", linkDoc(0.3))}${sep}${tb("Калькулятор", calc())}${tb("Календарь", calendar())}${sep}
          <button class="tb mem">M</button><button class="tb mem">M+</button><button class="tb mem">M−</button>${sep}${tb("Масштаб", mag())}${tb("Панели", cols())}${sep}
          <button class="tb user">${user()}Аделя Хабаидзе</button>${sep}${tb("Информация", info())}${tb("Еще", caret())}${sep}${tb("Свернуть", minimize(), true)}${tb("Восстановить", restore(), true)}${tb("Закрыть", winClose(), true)}</div>
      </header>
      <div class="toolbar">${tb("Меню функций", grid())}${tb("Избранное", star())}${tb("История", history())}${tb("Поиск", search())}${tb("Оповещения", bell())}</div>
      <div class="middle">
        <aside class="side">
          <ul class="sections">${sections.map(([k, t]) => html`<li><a href="#">${k === "help" ? html`<span class="q">?</span>` : icon(16, 16, nav[k])}<span>${t}</span></a></li>`)}</ul>
          <section class="block hist"><div class="blockhead"><h2>История</h2>${history()}</div>
            <ul class="recent">${recent.map(t => html`<li><a href="#">${t}</a></li>`)}</ul></section>
          <section class="block"><div class="blockhead"><h2>Избранное</h2>${star()}</div></section>
        </aside>
        <main class="work">
          <div class="head"><div class="navbtns"><button aria-label="Назад">${arrowL("#404040")}</button><button aria-label="Вперед">${arrowR("#a6a6a6")}</button></div><h1>Километраж по документам</h1><button class="tb x" aria-label="Закрыть">${icon(5, 8, svg`<path d="M0 1L6 7M6 1L0 7" stroke="#999"/>`)}</button></div>
          <div class="tablebox"><table>
            <colgroup><col class="c1"><col class="c2"><col class="c3"><col class="c4"><col class="c5"><col></colgroup>
            <thead><tr><th>Торговая точка</th><th>Включена в расчет</th><th>Расстояние (км)</th><th>Документ</th><th>Время документа</th><th>Документ за пределами радиуса</th></tr></thead>
            <tbody>${rows.map(r => this.renderRow(r))}<tr class="fill"><td colspan="6"></td></tr></tbody>
            <tfoot><tr><td></td><td></td><td></td><td></td><td></td><td></td></tr></tfoot>
          </table></div>
          <div class="legend">${warn()}<span>- отсутствуют координаты (<a href="#">как определить координаты?</a>)</span></div>
        </main>
      </div>
      <nav class="tabs">
        <button class="tab first">${home()}Начальная страница</button>
        <button class="tab">Информация ${cross("#404040")}</button>
        <button class="tab on">Километраж по документам ${cross("#a6a6a6")}</button>
        <button class="tab">Мерчандайзинг ${cross("#404040")}</button>
        <button class="tab">Контроль передвижений ${cross("#404040")}</button>
      </nav>
      <footer class="status"><button aria-label="Показатели">${monitors()}</button><span>Текущие вызовы: 2   Накопленные вызовы: 760</span></footer>

      ${this.renderCard()}
      ${this.renderCoords()}
      <div class="redbox"></div>
      <svg class="arrow1" width="56" height="56" viewBox="0 0 56 56" aria-hidden="true"><path d="M2 2L14 3L11.500 7L51 49L49.500 50L7 12L3 15Z" fill="#e63c32"/></svg>
      <svg class="arrow2" width="116" height="166" viewBox="0 0 116 166" aria-hidden="true"><path d="M109.500 4C110.500 1.500 114.500 2.500 114 5.500L25 149L35 154L10 162L5 135L15 140Z" fill="#e63c32"/></svg>
    </div></div>`;
  }
}
